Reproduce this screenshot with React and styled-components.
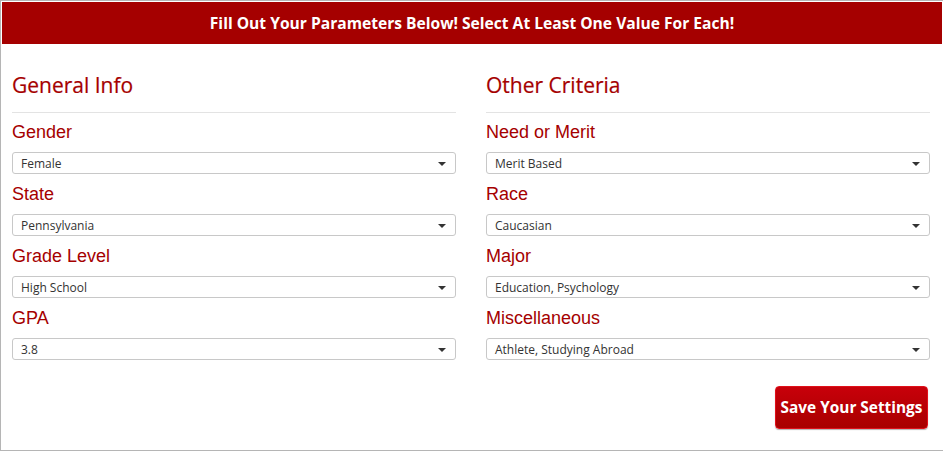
import React from 'react';
import styled, { createGlobalStyle } from 'styled-components';

const GlobalStyle = createGlobalStyle`
  body {
    margin: 0;
    background: #fff;
    font-family: "Open Sans", "Liberation Sans", sans-serif;
  }
`;

const Panel = styled.div`
  width: 940px;
  height: 447px;
  border: 1px solid #b5b5b5;
  padding: 1px;
  background: #fff;
  box-shadow: 1px 2px 2px rgba(0, 0, 0, 0.35);
`;

const Banner = styled.div`
  height: 42px;
  background: #a50000;
  color: #fff;
  font-weight: 700;
  font-size: 15.6px;
  display: flex;
  align-items: center;
  justify-content: center;
`;

const Columns = styled.div`
  display: grid;
  grid-template-columns: 444px 444px;
  column-gap: 30px;
  padding: 0 10px;
`;

const Column = styled.div`
  display: flex;
  flex-direction: column;
`;

const Heading = styled.h2`
  margin: 28px 0 0;
  font-size: 21px;
  font-weight: 400;
  line-height: 26px;
  color: #a50000;
  -webkit-text-stroke: 0.2px #a50000;
`;

const Rule = styled.hr`
  margin: 14px 0 0;
  border: 0;
  border-top: 1px solid #e3e3e3;
`;

const Label = styled.label`
  display: block;
  margin-top: ${p => (p.$first ? '8px' : '9px')};
  font-family: "Liberation Sans", Arial, sans-serif;
  font-size: 18px;
  line-height: 22px;
  color: #a50000;
`;

const Select = styled.div`
  margin-top: 9px;
  height: 22px;
  box-sizing: border-box;
  border: 1px solid #c8c8c8;
  border-radius: 3px;
  display: flex;
  align-items: center;
  justify-content: space-between;
  padding: 0 9px 0 8px;
  font-size: 12px;
  color: #333;
`;

const Caret = styled.span`
  width: 0;
  height: 0;
  border-left: 4px solid transparent;
  border-right: 4px solid transparent;
  border-top: 4px solid #333;
  margin-top: 1px;
`;

const Footer = styled.div`
  display: flex;
  justify-content: flex-end;
  padding: 26px 14px 0 0;
`;

const SaveButton = styled.button`
  width: 153px;
  height: 43px;
  border: 1px solid #e0101a;
  border-radius: 4px;
  background: linear-gradient(#c8000a, #a80000);
  box-shadow: 0 1px 1px rgba(0, 0, 0, 0.3);
  color: #fff;
  font-family: "Open Sans", sans-serif;
  font-weight: 700;
  font-size: 15.4px;
  padding: 0;
  cursor: pointer;
`;

const left = [
  ['Gender', 'Female'],
  ['State', 'Pennsylvania'],
  ['Grade Level', 'High School'],
  ['GPA', '3.8'],
];

const right = [
  ['Need or Merit', 'Merit Based'],
  ['Race', 'Caucasian'],
  ['Major', 'Education, Psychology'],
  ['Miscellaneous', 'Athlete, Studying Abroad'],
];

const Field = ({ label, value, first }) => (
  <>
    <Label $first={first}>{label}</Label>
    <Select>
      <span>{value}</span>
      <Caret />
    </Select>
  </>
);

const Section = ({ title, fields }) => (
  <Column>
    <Heading>{title}</Heading>
    <Rule />
    {fields.map(([l, v], i) => (
      <Field key={l} label={l} value={v} first={i === 0} />
    ))}
  </Column>
);

const App = () => (
  <>
    <GlobalStyle />
    <Panel>
      <Banner>Fill Out Your Parameters Below! Select At Least One Value For Each!</Banner>
      <Columns>
        <Section title="General Info" fields={left} />
        <Section title="Other Criteria" fields={right} />
      </Columns>
      <Footer>
        <SaveButton>Save Your Settings</SaveButton>
      </Footer>
    </Panel>
  </>
);

export default App;
